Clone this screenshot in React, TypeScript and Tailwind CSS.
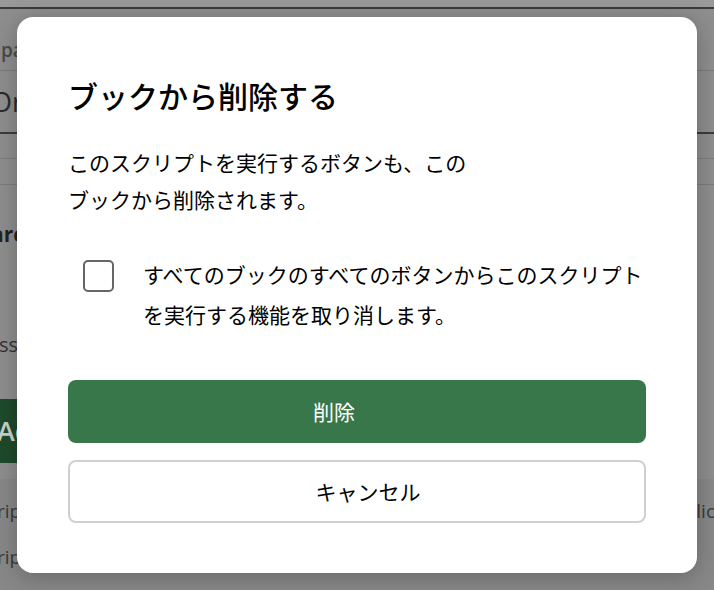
import React from "react";

const jp = "font-['Noto_Sans_CJK_JP','Noto_Sans',sans-serif]";

const PageBehind = () => {
  return (
    <div className="flex flex-col w-full h-full bg-[#8e8e8e] font-['Open_Sans',sans-serif] text-[#2a2a2a]">
      <div className="h-[7px] bg-[#999999]" />
      <div className="h-[2px] bg-[#3b3b3b]" />
      <div className="h-[61px] flex items-end pb-[7px] pl-[1px] text-[19px] font-semibold leading-[26px] text-[#4a4a4a]">
        pa
      </div>
      <div className="h-px bg-[#7a7a7a]" />
      <div className="h-[61px] flex items-center text-[27px] leading-[32px]">
        <span className="-ml-[9px]">Or</span>
      </div>
      <div className="h-[2px] bg-[#3b3b3b]" />
      <div className="h-[24px]" />
      <div className="h-px bg-[#7d7d7d]" />
      <div className="h-[25px]" />
      <div className="h-px bg-[#7d7d7d]" />
      <div className="h-[36px]" />
      <div className="text-[21px] leading-[26px] font-bold text-[#222]">
        <span className="-ml-[9px]">are</span>
      </div>
      <div className="h-[86px]" />
      <div className="text-[20px] leading-[24px] text-[#333]">
        <span className="-ml-[1px]">ss</span>
      </div>
      <div className="h-[42px]" />
      <div className="h-[64px] w-[60px] bg-[#1f4a2b] flex items-center text-[27px] font-semibold text-[#c9d2cb]">
        <span className="-ml-[3px]">Ac</span>
      </div>
      <div className="flex-1 flex flex-col mt-[16px] bg-[#888888]">
        <div className="flex justify-between mt-[20px] text-[19px] leading-[24px] text-[#3a3a3a]">
          <span className="-ml-[3px]">rip</span>
          <span className="-mr-[1px]">lic</span>
        </div>
        <div className="mt-[22px] text-[19px] leading-[24px] text-[#3a3a3a]">
          <span className="-ml-[3px]">rip</span>
        </div>
      </div>
    </div>
  );
};

const App = () => {
  return (
    <div className="relative w-[714px] h-[590px] overflow-hidden">
      <PageBehind />
      <div className="absolute inset-0 flex items-start justify-start pl-[17px] pt-[17px]">
        <div className={`w-[680px] h-[556px] rounded-[16px] bg-white shadow-[0_4px_24px_rgba(0,0,0,0.25)] flex flex-col px-[51px] pt-[60px] text-black ${jp}`}>
          <h1 className="text-[30px] leading-[36px] font-medium">ブックから削除する</h1>
          <p className="mt-[31px] text-[21px] leading-[37px] whitespace-nowrap">
            このスクリプトを実行するボタンも、この
            <br />
            ブックから削除されます。
          </p>
          <label className="mt-[36px] flex items-start gap-[29px] pl-[15px]">
            <span className="mt-[6px] w-[31px] h-[32px] shrink-0 rounded-[5px] border-2 border-[#666666] bg-white" />
            <span className="text-[21px] leading-[40px] whitespace-nowrap">
              すべてのブックのすべてのボタンからこのスクリプト
              <br />
              を実行する機能を取り消します。
            </span>
          </label>
          <button className="mt-[46px] h-[63px] w-full rounded-[8px] bg-[#38774a] text-white text-[21px] flex items-center justify-center pr-[46px]">
            削除
          </button>
          <button className="mt-[17px] h-[63px] w-full rounded-[8px] border-2 border-[#d0d0d0] bg-white text-black text-[21px] flex items-center justify-center pl-[22px]">
            キャンセル
          </button>
        </div>
      </div>
    </div>
  );
};

export default App;
